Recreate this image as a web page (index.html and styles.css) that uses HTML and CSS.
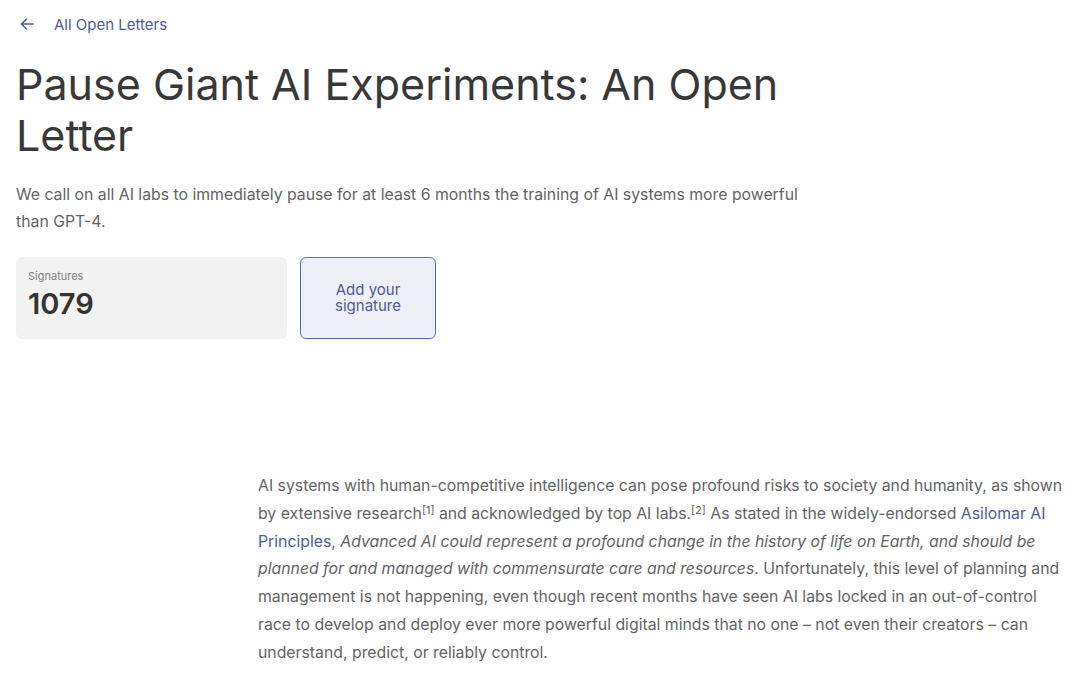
FILE: index.html
```html
<!DOCTYPE html>
<html>
<head>
    <title>Pause Giant AI Experiments: An Open Letter</title>
    <meta charset="UTF-8">
    <link rel="stylesheet" href="styles.css">
</head>
<body>
    <header class="letter-head">
        <a class="back-link" href="#">
            <svg width="16" height="16" viewBox="0 0 16 16" fill="none" stroke="currentColor" stroke-width="1.6" stroke-linecap="round" stroke-linejoin="round">
                <path d="M14 8H2.5"/>
                <path d="M7.5 3L2.5 8l5 5"/>
            </svg>
            <span>All Open Letters</span>
        </a>

        <h1>Pause Giant AI Experiments: An Open Letter</h1>

        <p class="lead">We call on all AI labs to immediately pause for at least 6 months the training of AI systems more powerful than GPT-4.</p>

        <div class="sign-row">
            <div class="counter">
                <div class="counter-label">Signatures</div>
                <div class="counter-value">1079</div>
            </div>
            <button class="sign-button">Add your<br>signature</button>
        </div>
    </header>

    <main class="letter-body">
        <div class="side"></div>
        <article class="letter-text">
            <p>AI systems with human-competitive intelligence can pose profound risks to society and humanity, as shown by extensive research<sup>[1]</sup> and acknowledged by top AI labs.<sup>[2]</sup> As stated in the widely-endorsed <a href="#">Asilomar AI Principles</a>, <em>Advanced AI could represent a profound change in the history of life on Earth, and should be planned for and managed with commensurate care and resources</em>. Unfortunately, this level of planning and management is not happening, even though recent months have seen AI labs locked in an out-of-control race to develop and deploy ever more powerful digital minds that no one – not even their creators – can understand, predict, or reliably control.</p>
        </article>
    </main>
</body>
</html>
```

FILE: styles.css
```css
body {
    font-family: Inter, "Noto Sans", Arial, sans-serif;
    color: #3a3a3a;
    margin: 0;
    padding: 0 16px 0 16px;
    background: #fff;
}

.letter-head {
    max-width: 800px;
}

.back-link {
    display: flex;
    align-items: center;
    gap: 19px;
    height: 48px;
    padding-left: 3px;
    color: #4f5b96;
    font-size: 15px;
    text-decoration: none;
}

.back-link svg {
    display: block;
}

h1 {
    font-size: 43px;
    font-weight: 400;
    line-height: 51px;
    margin: 11px 0 20px;
    color: #383838;
}

.lead {
    font-size: 15.8px;
    line-height: 27px;
    color: #636363;
    margin: 0 0 22px;
}

.sign-row {
    display: flex;
    gap: 13px;
}

.counter {
    width: 271px;
    height: 82px;
    box-sizing: border-box;
    padding: 12px 12px;
    background: #f2f2f2;
    border-radius: 6px;
}

.counter-label {
    font-size: 11px;
    color: #808080;
    margin-bottom: 3px;
}

.counter-value {
    font-size: 29px;
    font-weight: 600;
    line-height: 36px;
    color: #333;
}

.sign-button {
    width: 136px;
    height: 82px;
    background: #eef0f8;
    border: 1px solid #5d6aa6;
    border-radius: 6px;
    color: #4f5b96;
    font-family: inherit;
    font-size: 15px;
    line-height: 16px;
}

.letter-body {
    display: grid;
    grid-template-columns: 1fr 806px;
    margin-top: 133px;
}

.letter-text p {
    font-size: 15.8px;
    line-height: 27.8px;
    color: #636363;
    margin: 0;
}

.letter-text sup {
    font-size: 11px;
    line-height: 0;
    vertical-align: 5px;
}

.letter-text a {
    color: #4f5b96;
    text-decoration: none;
}
```
